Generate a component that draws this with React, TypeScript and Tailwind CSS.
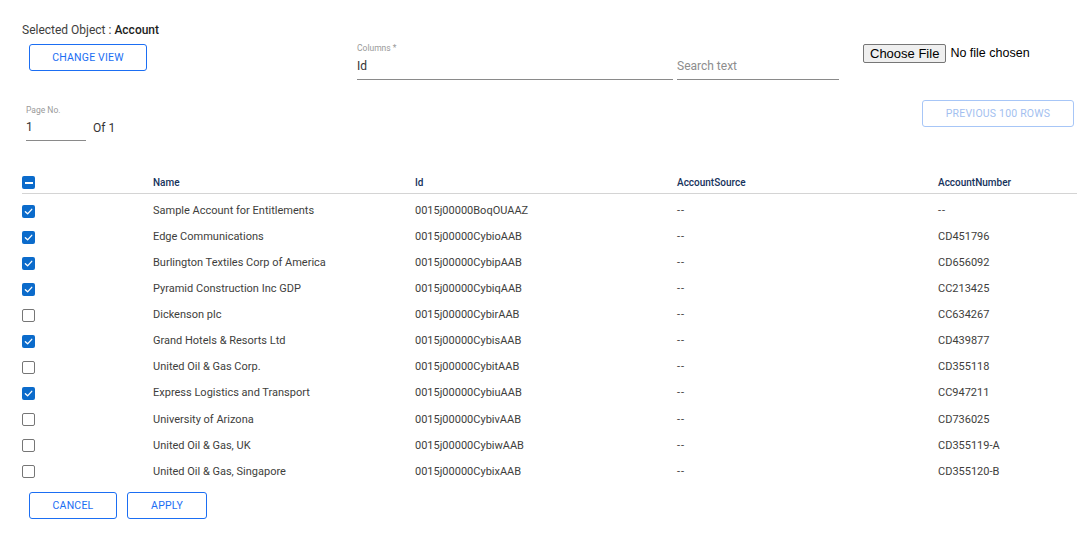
import React from "react";

const rows: { name: string; id: string; src: string; num: string; checked: boolean }[] = [
  { name: "Sample Account for Entitlements", id: "0015j00000BoqOUAAZ", src: "--", num: "--", checked: true },
  { name: "Edge Communications", id: "0015j00000CybioAAB", src: "--", num: "CD451796", checked: true },
  { name: "Burlington Textiles Corp of America", id: "0015j00000CybipAAB", src: "--", num: "CD656092", checked: true },
  { name: "Pyramid Construction Inc GDP", id: "0015j00000CybiqAAB", src: "--", num: "CC213425", checked: true },
  { name: "Dickenson plc", id: "0015j00000CybirAAB", src: "--", num: "CC634267", checked: false },
  { name: "Grand Hotels & Resorts Ltd", id: "0015j00000CybisAAB", src: "--", num: "CD439877", checked: true },
  { name: "United Oil & Gas Corp.", id: "0015j00000CybitAAB", src: "--", num: "CD355118", checked: false },
  { name: "Express Logistics and Transport", id: "0015j00000CybiuAAB", src: "--", num: "CC947211", checked: true },
  { name: "University of Arizona", id: "0015j00000CybivAAB", src: "--", num: "CD736025", checked: false },
  { name: "United Oil & Gas, UK", id: "0015j00000CybiwAAB", src: "--", num: "CD355119-A", checked: false },
  { name: "United Oil & Gas, Singapore", id: "0015j00000CybixAAB", src: "--", num: "CD355120-B", checked: false },
  { name: "GenePoint", id: "0015j00000CybiyAAB", src: "--", num: "CC978213", checked: false },
];

function Check({ state }: { state: "on" | "off" | "mixed" }) {
  if (state === "off") {
    return <span className="block w-[13px] h-[13px] rounded-[2px] border border-[#767676] bg-white" />;
  }
  return (
    <span className="flex items-center justify-center w-[13px] h-[13px] rounded-[2px] bg-[#0b6bcb]">
      {state === "on" ? (
        <svg width="9" height="9" viewBox="0 0 10 10" fill="none">
          <path d="M1.5 5.3 L4 7.6 L8.6 2.6" stroke="white" strokeWidth="1.5" strokeLinecap="round" strokeLinejoin="round" />
        </svg>
      ) : (
        <span className="block w-[8px] h-[2px] bg-white" />
      )}
    </span>
  );
}

export default function App() {
  return (
    <div className="w-[1077px] h-[536px] bg-white overflow-hidden text-[#3e3e3c]" style={{ fontFamily: "Roboto, 'Noto Sans', sans-serif" }}>
      <div className="pl-[22px] pt-[22px] h-[16px] box-content text-[12px] leading-[16px] text-[#3e3e3c]">
        Selected Object : <span className="font-medium text-[#1d1d1d]">Account</span>
      </div>
      <div className="flex mt-[6px] h-[36px]">
        <div className="w-[357px] pl-[29px]">
          <button className="w-[118px] h-[27px] border border-[#1b6ef3] rounded-[3px] text-[#1b6ef3] text-[10.5px] tracking-[0.2px]">
            CHANGE VIEW
          </button>
        </div>
        <div className="w-[316px] border-b border-[#8a8a8a] flex flex-col">
          <div className="text-[8.5px] leading-[10px] text-[#9a9a9a] mt-[-1px]">Columns *</div>
          <div className="text-[12px] leading-[16px] mt-[5px] text-[#333]">Id</div>
        </div>
        <div className="w-[162px] ml-[4px] border-b border-[#8a8a8a] flex items-end pb-[5px]">
          <div className="text-[12px] leading-[16px] text-[#8d8d8d]">Search text</div>
        </div>
        <div className="ml-[24px] flex items-start" style={{ fontFamily: "'Liberation Sans', Arial, sans-serif" }}>
          <span className="h-[19px] px-[6px] bg-[#efefef] border border-[#767676] rounded-[2px] text-[13px] leading-[17px] text-black">
            Choose File
          </span>
          <span className="ml-[4px] text-[12.5px] leading-[19px] text-black">No file chosen</span>
        </div>
      </div>
      <div className="flex justify-between items-start mt-[25px] h-[40px]">
        <div className="pl-[26px]">
          <div className="text-[8.5px] leading-[10px] text-[#9a9a9a]">Page No.</div>
          <div className="flex items-end mt-[4px]">
            <div className="w-[60px] border-b border-[#8a8a8a] text-[12px] leading-[16px] pb-[5px] text-[#333]">1</div>
            <div className="ml-[7px] text-[12px] leading-[16px] pb-[5px] text-[#333]">Of 1</div>
          </div>
        </div>
        <button className="mr-[3px] mt-[-5px] w-[152px] h-[27px] border border-[#a7c6f7] rounded-[3px] text-[#a3bff0] text-[10.5px] tracking-[0.2px]">
          PREVIOUS 100 ROWS
        </button>
      </div>
      <div className="ml-[22px] mt-[27px] h-[320px] overflow-hidden">
        <div className="grid grid-cols-[131px_262px_262px_261px_1fr] items-center h-[22px] border-b border-[#d4d4d4] text-[10px] font-medium text-[#16325c]">
          <div><Check state="mixed" /></div>
          <div>Name</div>
          <div>Id</div>
          <div>AccountSource</div>
          <div>AccountNumber</div>
        </div>
        <div className="pt-[4px]">
          {rows.map((r, i) => (
            <div key={i} className="grid grid-cols-[131px_262px_262px_261px_1fr] items-center h-[26.1px] text-[11px] text-[#3e3e3c]">
              <div><Check state={r.checked ? "on" : "off"} /></div>
              <div>{r.name}</div>
              <div>{r.id}</div>
              <div className="tracking-[1px]">{r.src}</div>
              <div className={r.num === "--" ? "tracking-[1px]" : ""}>{r.num}</div>
            </div>
          ))}
        </div>
      </div>
      <div className="flex gap-[10px] pl-[29px]">
        <button className="w-[88px] h-[27px] border border-[#1b6ef3] rounded-[3px] text-[#1b6ef3] text-[10.5px] tracking-[0.2px]">CANCEL</button>
        <button className="w-[80px] h-[27px] border border-[#1b6ef3] rounded-[3px] text-[#1b6ef3] text-[10.5px] tracking-[0.2px]">APPLY</button>
      </div>
    </div>
  );
}
